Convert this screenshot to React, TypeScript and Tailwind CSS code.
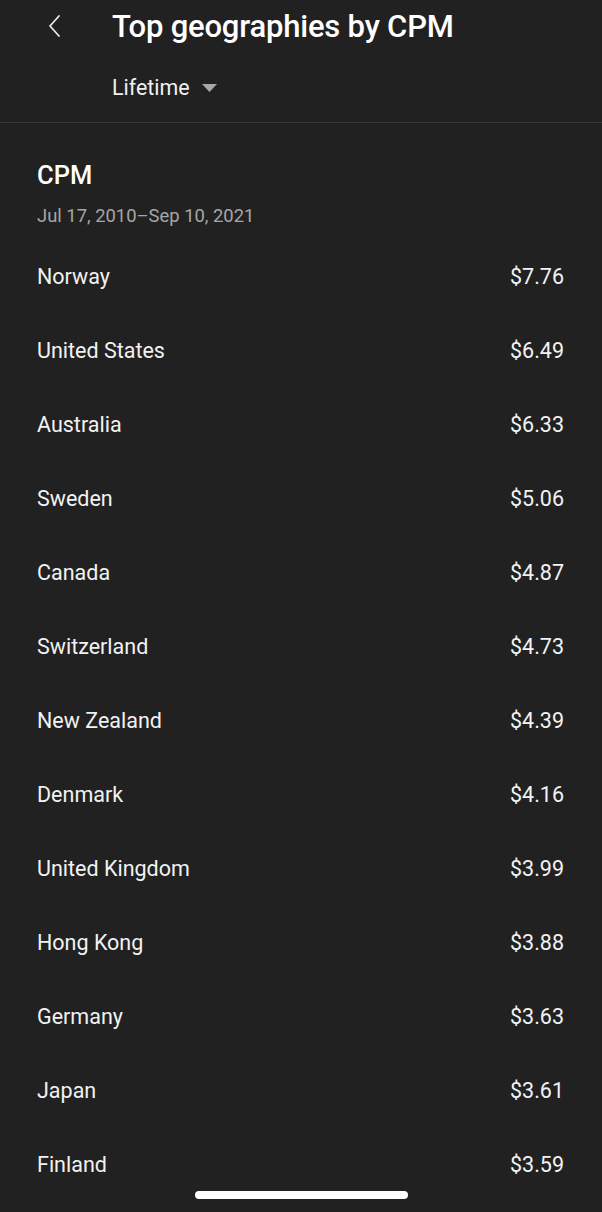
import React from "react";

const rows: [string, string][] = [
  ["Norway", "$7.76"],
  ["United States", "$6.49"],
  ["Australia", "$6.33"],
  ["Sweden", "$5.06"],
  ["Canada", "$4.87"],
  ["Switzerland", "$4.73"],
  ["New Zealand", "$4.39"],
  ["Denmark", "$4.16"],
  ["United Kingdom", "$3.99"],
  ["Hong Kong", "$3.88"],
  ["Germany", "$3.63"],
  ["Japan", "$3.61"],
  ["Finland", "$3.59"],
];

export default function App() {
  return (
    <div
      className="relative w-[602px] h-[1212px] overflow-hidden bg-[#212121] text-white"
      style={{ fontFamily: "Roboto, 'Noto Sans', sans-serif" }}
    >
      <div className="h-[123px] border-b border-[#3a3a3a] bg-[#212121]">
        <div className="flex items-center h-[52px]">
          <div className="w-[112px] flex items-center pl-[46px]">
            <svg width="18" height="26" viewBox="0 0 18 26" fill="none">
              <path d="M13 3 L4 13 L13 23" stroke="#e8e8e8" strokeWidth="1.8" strokeLinecap="round" strokeLinejoin="round" />
            </svg>
          </div>
          <div className="text-[31px] font-medium leading-none tracking-[-0.2px]">Top geographies by CPM</div>
        </div>
        <div className="flex items-center pl-[112px] mt-[25px]">
          <span className="text-[21.4px] leading-none text-[#f0f0f0]">Lifetime</span>
          <svg className="ml-[12px]" width="15" height="8" viewBox="0 0 15 8">
            <path d="M0 0 L15 0 L7.5 8 Z" fill="#a8a8a8" />
          </svg>
        </div>
      </div>
      <div className="pl-[37px] pr-[38px]">
        <div className="pt-[39px] text-[25.5px] font-medium leading-[26px]">CPM</div>
        <div className="mt-[18px] text-[18.4px] leading-[20px] text-[#a6a6a6]">Jul 17, 2010–Sep 10, 2021</div>
        <div className="mt-[14px] flex flex-col">
          {rows.map(([c, v]) => (
            <div key={c} className="flex justify-between items-center h-[74px] text-[21.5px] text-[#f2f2f2]">
              <span>{c}</span>
              <span>{v}</span>
            </div>
          ))}
        </div>
      </div>
      <div className="absolute left-[195px] top-[1191px] w-[213px] h-[8px] rounded-full bg-white" />
    </div>
  );
}
